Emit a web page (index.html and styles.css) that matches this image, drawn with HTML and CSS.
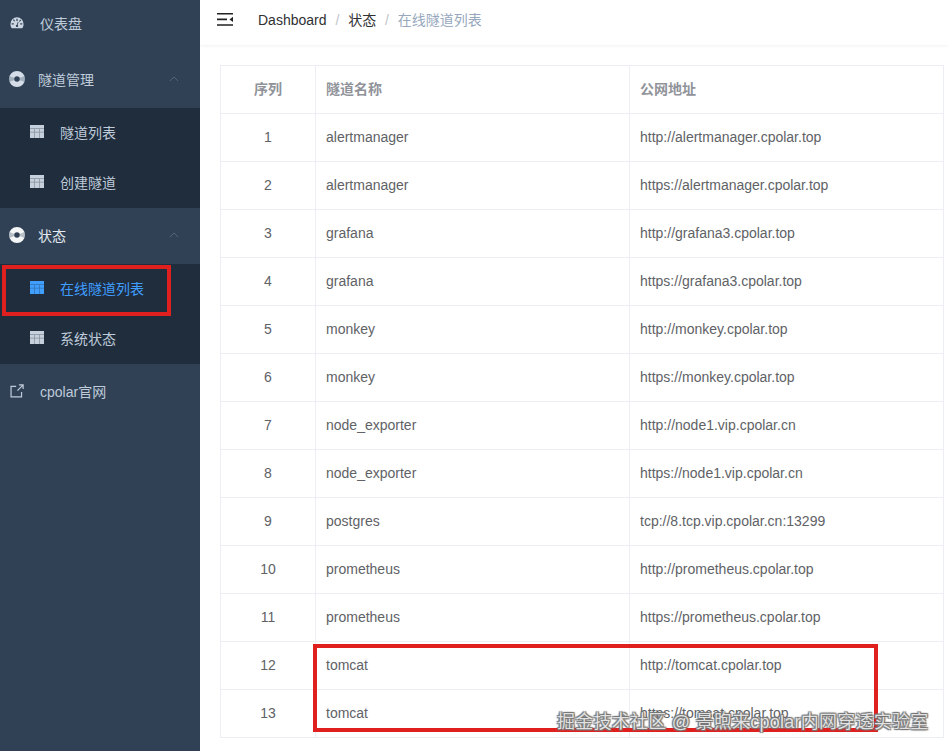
FILE: index.html
```html
<!DOCTYPE html>
<html lang="zh-CN">
<head>
    <meta charset="UTF-8">
    <meta name="viewport" content="width=device-width, initial-scale=1.0">
    <title>在线隧道列表</title>
    <link rel="stylesheet" href="styles.css">
</head>
<body>
    <div class="app">
        <aside class="sidebar">
            <a href="#" class="menu-item menu-first">
                <svg class="menu-icon gauge" viewBox="0 0 16 14"><path fill-rule="evenodd" d="M8 0.5A7.5 7.5 0 0 0 0.5 8c0 1.8.5 3.4 1.3 4.6.2.3.5.4.8.4h10.8c.3 0 .6-.1.8-.4.8-1.2 1.3-2.8 1.3-4.6A7.5 7.5 0 0 0 8 .5zM7.3 2.2h1.4v2.4H7.3zM3.4 3.6l1-1 1.4 2-1 .8zM1.9 7.4h2.4v1.4H1.9zM11.7 7.4h2.4v1.4h-2.4zM10.2 4.9l1.6-1.9 1 1-1.9 1.6zM6.7 10.2c0-.7.5-1.2 1.1-1.3l1.2-3.2.8.3-1.1 3.3c.3.2.6.6.6 1 0 .7-.6 1.3-1.3 1.3s-1.3-.6-1.3-1.4z"/></svg>
                <span class="menu-text">仪表盘</span>
            </a>
            <a href="#" class="menu-item menu-group">
                <svg class="menu-icon ring" viewBox="0 0 16 16"><use href="#ring-shape"/></svg>
                <span class="menu-text">隧道管理</span>
                <svg class="arrow" viewBox="0 0 12 7"><path d="M1 6l5-5 5 5"/></svg>
            </a>
            <div class="submenu">
                <a href="#" class="sub-item">
                    <svg class="sub-icon" viewBox="0 0 14 13"><use href="#table-shape"/></svg>
                    <span>隧道列表</span>
                </a>
                <a href="#" class="sub-item">
                    <svg class="sub-icon" viewBox="0 0 14 13"><use href="#table-shape"/></svg>
                    <span>创建隧道</span>
                </a>
            </div>
            <a href="#" class="menu-item menu-group menu-open">
                <svg class="menu-icon ring" viewBox="0 0 16 16"><use href="#ring-shape"/></svg>
                <span class="menu-text">状态</span>
                <svg class="arrow" viewBox="0 0 12 7"><path d="M1 6l5-5 5 5"/></svg>
            </a>
            <div class="submenu">
                <a href="#" class="sub-item active">
                    <svg class="sub-icon" viewBox="0 0 14 13"><use href="#table-shape"/></svg>
                    <span>在线隧道列表</span>
                </a>
                <a href="#" class="sub-item">
                    <svg class="sub-icon" viewBox="0 0 14 13"><use href="#table-shape"/></svg>
                    <span>系统状态</span>
                </a>
            </div>
            <a href="#" class="menu-item">
                <svg class="menu-icon link-icon" viewBox="0 0 16 16"><path d="M7 2.7H1.2v12h12V9M8.5 7.5L15 1M10.2 1H15v4.8"/></svg>
                <span class="menu-text">cpolar官网</span>
            </a>
            <div class="mark mark-side"></div>
        </aside>

        <main class="main">
            <header class="navbar">
                <svg class="hamburger" viewBox="0 0 16 13"><path d="M0 0h16v1.6H0zM0 5.6h10v1.6H0zM0 11.2h16v1.6H0zM16 3.7v5.4l-3.5-2.7z"/></svg>
                <nav class="breadcrumb">
                    <a href="#">Dashboard</a>
                    <span class="sep">/</span>
                    <a href="#">状态</a>
                    <span class="sep">/</span>
                    <span class="current">在线隧道列表</span>
                </nav>
            </header>

            <section class="content">
                <table class="tunnels">
                    <thead>
                        <tr>
                            <th class="col-num">序列</th>
                            <th>隧道名称</th>
                            <th>公网地址</th>
                        </tr>
                    </thead>
                    <tbody>
                        <tr><td class="col-num">1</td><td>alertmanager</td><td>http://alertmanager.cpolar.top</td></tr>
                        <tr><td class="col-num">2</td><td>alertmanager</td><td>https://alertmanager.cpolar.top</td></tr>
                        <tr><td class="col-num">3</td><td>grafana</td><td>http://grafana3.cpolar.top</td></tr>
                        <tr><td class="col-num">4</td><td>grafana</td><td>https://grafana3.cpolar.top</td></tr>
                        <tr><td class="col-num">5</td><td>monkey</td><td>http://monkey.cpolar.top</td></tr>
                        <tr><td class="col-num">6</td><td>monkey</td><td>https://monkey.cpolar.top</td></tr>
                        <tr><td class="col-num">7</td><td>node_exporter</td><td>http://node1.vip.cpolar.cn</td></tr>
                        <tr><td class="col-num">8</td><td>node_exporter</td><td>https://node1.vip.cpolar.cn</td></tr>
                        <tr><td class="col-num">9</td><td>postgres</td><td>tcp://8.tcp.vip.cpolar.cn:13299</td></tr>
                        <tr><td class="col-num">10</td><td>prometheus</td><td>http://prometheus.cpolar.top</td></tr>
                        <tr><td class="col-num">11</td><td>prometheus</td><td>https://prometheus.cpolar.top</td></tr>
                        <tr><td class="col-num">12</td><td>tomcat</td><td>http://tomcat.cpolar.top</td></tr>
                        <tr><td class="col-num">13</td><td>tomcat</td><td>https://tomcat.cpolar.top</td></tr>
                    </tbody>
                </table>
                <div class="mark mark-table"></div>
            </section>
        </main>
    </div>
    <div class="watermark">掘金技术社区 @ 景煦来cpolar内网穿透实验室</div>

    <svg class="defs" width="0" height="0">
        <defs>
            <g id="ring-shape">
                <path fill-rule="evenodd" d="M8 0a8 8 0 1 0 0 16A8 8 0 0 0 8 0zm0 5.2a2.8 2.8 0 1 1 0 5.6 2.8 2.8 0 0 1 0-5.6z"/>
                <path class="ring-band" d="M0.6 5l4.7 2q-.2 1 0 2l-4.7 2q-1.2-3 0-6zM15.4 5l-4.7 2q.2 1 0 2l4.7 2q1.2-3 0-6z"/>
            </g>
            <g id="table-shape">
                <rect class="cell-gap" width="14" height="13"/>
                <path d="M0 0h14v3.2H0zM0 4h4.2v2.8H0zM4.9 4h4.2v2.8H4.9zM9.8 4H14v2.8H9.8zM0 7.6h4.2V13H0zM4.9 7.6h4.2V13H4.9zM9.8 7.6H14V13H9.8z"/>
            </g>
        </defs>
    </svg>
</body>
</html>
```

FILE: styles.css
```css
html, body {
    margin: 0;
    height: 100%;
    overflow: hidden;
}
body {
    font-family: "Liberation Sans", "Noto Sans CJK SC", sans-serif;
    font-size: 14px;
    color: #606266;
    background-color: #fff;
}
a {
    color: inherit;
    text-decoration: none;
}
.app {
    display: flex;
    height: 751px;
}

/* sidebar */
.sidebar {
    position: relative;
    width: 200px;
    flex: none;
    background-color: #304156;
}
.menu-item {
    display: flex;
    align-items: center;
    height: 56px;
    box-sizing: border-box;
    padding: 0 0 2px 10px;
    color: #bfcbd9;
}
.menu-first {
    height: 52px;
    padding-bottom: 6px;
}
.menu-icon {
    width: 14px;
    height: 14px;
    fill: #bfcbd9;
    margin-right: 16px;
    flex: none;
}
.gauge {
    fill: #ccd6e2;
}
.menu-group {
    position: relative;
}
.ring {
    width: 16px;
    height: 16px;
    margin-left: -1px;
    margin-right: 13px;
    fill: #d5dee8;
}
.ring-band {
    fill: #304156;
    opacity: 0.3;
}
.link-icon {
    fill: none;
    stroke: #bfcbd9;
    stroke-width: 1.4;
}
.menu-open .menu-text {
    color: #e4e9ef;
}
.menu-open .ring {
    fill: #f4f6f8;
}
.arrow {
    position: absolute;
    right: 21px;
    top: 24px;
    width: 10px;
    height: 6px;
    fill: none;
    stroke: #5d6c80;
    stroke-width: 1;
}
.submenu {
    background-color: #1f2d3d;
}
.sub-item {
    display: flex;
    align-items: center;
    height: 50px;
    box-sizing: border-box;
    padding: 0 0 2px 30px;
    color: #bfcbd9;
}
.sub-icon {
    width: 14px;
    height: 13px;
    fill: #c6d0dc;
    margin-right: 16px;
    margin-top: -1px;
    flex: none;
}
.cell-gap {
    opacity: 0.6;
}
.sub-item.active {
    color: #409eff;
}
.sub-item.active .sub-icon {
    fill: #409eff;
}

/* red marks drawn over the screenshot */
.mark {
    position: absolute;
    border: 4px solid #e0201f;
    box-sizing: border-box;
}
.mark-side {
    left: 2px;
    top: 265px;
    width: 169px;
    height: 51px;
}
.mark-table {
    left: 113px;
    top: 599px;
    width: 565px;
    height: 88px;
}

/* top bar */
.main {
    flex: 1;
    min-width: 0;
}
.navbar {
    display: flex;
    align-items: center;
    height: 45px;
    box-sizing: border-box;
    padding: 0 0 7px 17px;
    box-shadow: 0 1px 3px rgba(0, 21, 41, 0.06);
}
.hamburger {
    width: 16px;
    height: 13px;
    fill: #222;
    margin-right: 25px;
}
.breadcrumb {
    color: #303133;
}
.sep {
    color: #c0c4cc;
    margin: 0 5px;
}
.current {
    color: #97a8be;
}

/* table */
.content {
    position: relative;
    padding: 20px 4px 0 20px;
}
.tunnels {
    width: 724px;
    border-collapse: collapse;
    table-layout: fixed;
}
.tunnels th,
.tunnels td {
    height: 45px;
    padding: 0 10px 2px;
    border: 1px solid #ebeef5;
    text-align: left;
    box-sizing: content-box;
}
.tunnels th {
    height: 43px;
    padding-bottom: 4px;
    color: #909399;
    font-weight: bold;
    font-size: 14px;
}
.tunnels th.col-num,
.tunnels td.col-num {
    width: 74px;
    text-align: center;
}
.tunnels th:nth-child(2),
.tunnels td:nth-child(2) {
    width: 293px;
}

.watermark {
    position: absolute;
    left: 557px;
    top: 707px;
    font-size: 18px;
    letter-spacing: 0.25px;
    color: #e2e2e2;
    white-space: nowrap;
    text-shadow: 0 0 1px #666, 1px 1px 1px #777, -1px -1px 1px #777, 1px -1px 1px #777, -1px 1px 1px #777;
}
.defs {
    position: absolute;
}
```
